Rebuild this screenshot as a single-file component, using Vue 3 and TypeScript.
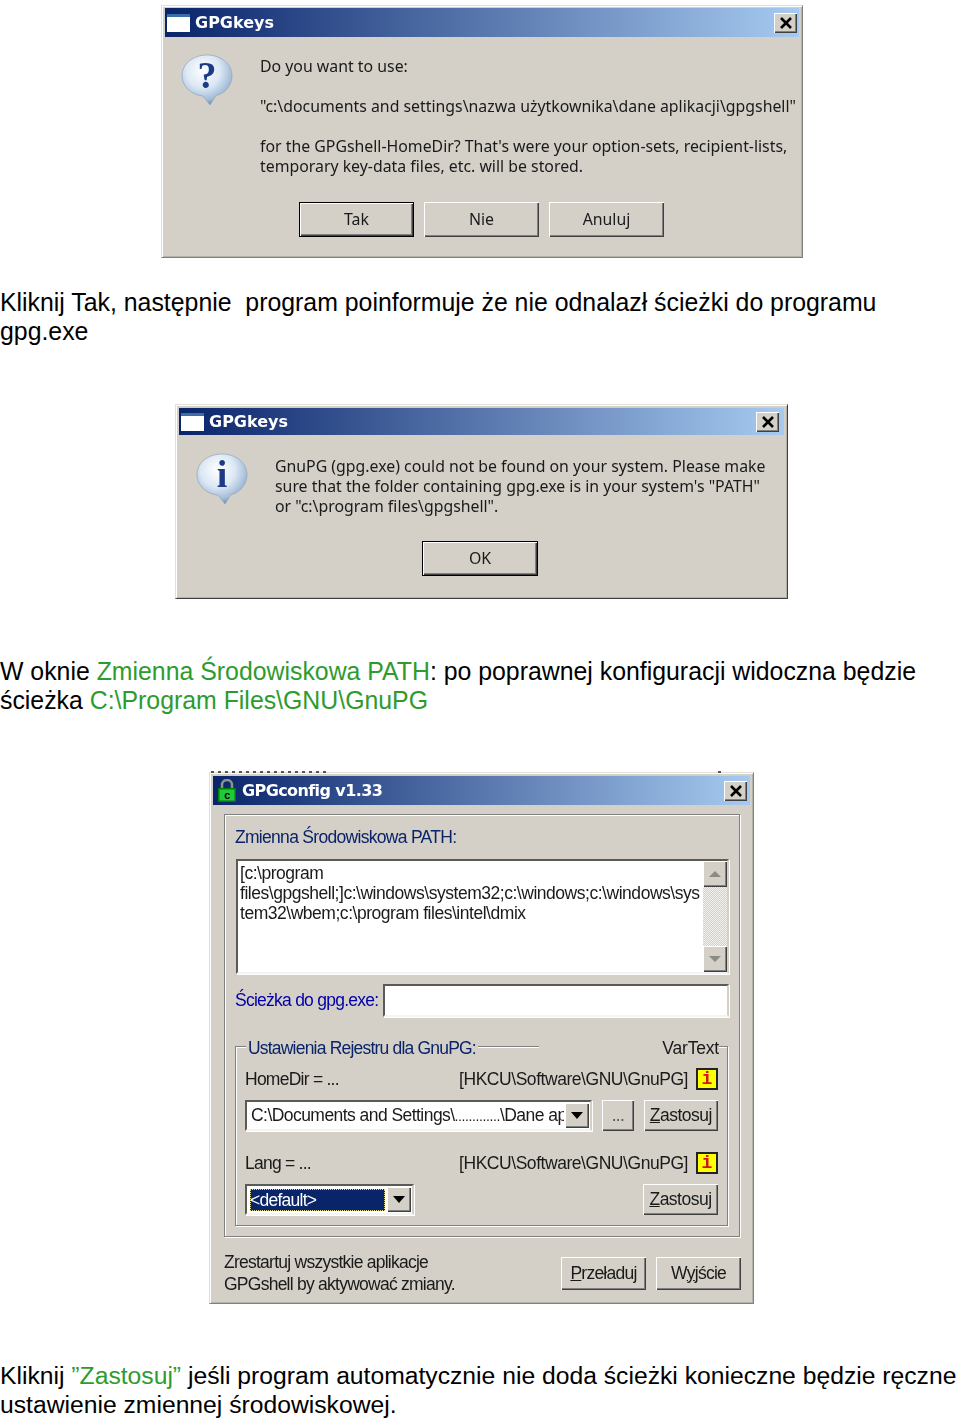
<script setup lang="ts">
const questionButtons: string[] = ['Tak', 'Nie', 'Anuluj']
</script>

<template>
  <main class="page">
    <section class="win win-q">
      <header class="title">
        <span class="win-icon"></span>
        <span class="title-text">GPGkeys</span>
        <span class="close">
          <svg width="14" height="12" viewBox="0 0 14 12"><path d="M2 1l10 10M12 1L2 11" stroke="#000" stroke-width="2.6" fill="none" /></svg>
        </span>
      </header>
      <div class="dlg-body">
        <svg class="bubble" width="50" height="50" viewBox="0 0 50 50">
          <defs>
            <radialGradient id="bq" cx="42%" cy="32%" r="68%">
              <stop offset="0" stop-color="#ffffff" />
              <stop offset=".5" stop-color="#dce8f4" />
              <stop offset=".85" stop-color="#a3bcd8" />
              <stop offset="1" stop-color="#6f8fb6" />
            </radialGradient>
          </defs>
          <path d="M25 0C39 0 50 9 50 20.500C50 31 42 39 34 40.500L28 50L21 41C10 40 0 32 0 20.500C0 9 11 0 25 0Z" fill="url(#bq)" stroke="#8fa3bb" stroke-width=".7" />
          <text x="25" y="33" text-anchor="middle" class="glyph">?</text>
        </svg>
        <div class="dlg-text">
          <p class="line">Do you want to use:</p>
          <p class="line gap">"c:\documents and settings\nazwa użytkownika\dane aplikacji\gpgshell"</p>
          <p class="line gap">for the GPGshell-HomeDir? That's were your option-sets, recipient-lists,</p>
          <p class="line">temporary key-data files, etc. will be stored.</p>
        </div>
      </div>
      <div class="dlg-buttons">
        <span v-for="(b, i) in questionButtons" :key="b" class="btn dlg-btn" :class="{ 'is-default': i === 0 }">{{ b }}</span>
      </div>
    </section>

    <p class="para para-1">Kliknij Tak, następnie&nbsp; program poinformuje że nie odnalazł ścieżki do programu<br />gpg.exe</p>

    <section class="win win-i">
      <header class="title title-i">
        <span class="win-icon"></span>
        <span class="title-text">GPGkeys</span>
        <span class="close close-i">
          <svg width="14" height="12" viewBox="0 0 14 12"><path d="M2 1l10 10M12 1L2 11" stroke="#000" stroke-width="2.6" fill="none" /></svg>
        </span>
      </header>
      <div class="dlg-body dlg-body-i">
        <svg class="bubble" width="50" height="50" viewBox="0 0 50 50">
          <defs>
            <radialGradient id="bi" cx="42%" cy="32%" r="68%">
              <stop offset="0" stop-color="#ffffff" />
              <stop offset=".5" stop-color="#dce8f4" />
              <stop offset=".85" stop-color="#a3bcd8" />
              <stop offset="1" stop-color="#6f8fb6" />
            </radialGradient>
          </defs>
          <path d="M25 0C39 0 50 9 50 20.500C50 31 42 39 34 40.500L28 50L21 41C10 40 0 32 0 20.500C0 9 11 0 25 0Z" fill="url(#bi)" stroke="#8fa3bb" stroke-width=".7" />
          <text x="25" y="33" text-anchor="middle" class="glyph">i</text>
        </svg>
        <div class="dlg-text dlg-text-i">
          <p class="line">GnuPG (gpg.exe) could not be found on your system. Please make</p>
          <p class="line">sure that the folder containing gpg.exe is in your system's "PATH"</p>
          <p class="line">or "c:\program files\gpgshell".</p>
        </div>
      </div>
      <div class="dlg-buttons dlg-buttons-i">
        <span class="btn dlg-btn dlg-btn-ok is-default">OK</span>
      </div>
    </section>

    <p class="para para-2">W oknie <span class="green">Zmienna Środowiskowa PATH</span>: po poprawnej konfiguracji widoczna będzie<br />ścieżka <span class="green">C:\Program Files\GNU\GnuPG</span></p>

    <section class="win win-c">
      <span class="scrap scrap-l"></span>
      <span class="scrap scrap-r"></span>
      <header class="title title-c">
        <svg class="lock" width="18" height="23" viewBox="0 0 18 23">
          <path d="M4 10V6a5 5 0 0 1 10 0v4" fill="none" stroke="#8a9488" stroke-width="2.500" />
          <rect x="0" y="9" width="18" height="14" fill="#008000" />
          <rect x="1.500" y="10.500" width="15" height="11" fill="#22c83c" />
          <text x="9" y="20" text-anchor="middle" class="lock-c">c</text>
        </svg>
        <span class="title-text title-text-c">GPGconfig v1.33</span>
        <span class="close close-c">
          <svg width="14" height="12" viewBox="0 0 14 12"><path d="M2 1l10 10M12 1L2 11" stroke="#000" stroke-width="2.6" fill="none" /></svg>
        </span>
      </header>

      <div class="panel etched">
        <div class="panel-label navy">Zmienna Środowiskowa PATH:</div>
        <div class="memo sunken">
          <div class="memo-text">[c:\program<br />files\gpgshell;]c:\windows\system32;c:\windows;c:\windows\sys<br />tem32\wbem;c:\program files\intel\dmix</div>
          <div class="scrollbar">
            <span class="btn scroll-btn"><i class="tri tri-up"></i></span>
            <span class="scroll-btn btn"><i class="tri tri-down"></i></span>
          </div>
        </div>
        <div class="path-row">
          <span class="path-label">Ścieżka do gpg.exe:</span>
          <span class="path-input sunken"></span>
        </div>

        <div class="group etched">
          <div class="group-head">
            <span class="legend navy">Ustawienia Rejestru dla GnuPG:</span>
            <span class="legend-right">VarText</span>
          </div>
          <div class="reg-row">
            <span>HomeDir = ...</span>
            <span class="reg-key">[HKCU\Software\GNU\GnuPG]</span>
            <span class="info">i</span>
          </div>
          <div class="ctl-row">
            <span class="combo combo-wide sunken">
              <span class="combo-val">C:\Documents and Settings\<span class="tiny-dots">.............</span>\Dane aplikacji</span>
              <span class="btn combo-btn"><i class="tri tri-black"></i></span>
            </span>
            <span class="btn small-btn dots">...</span>
            <span class="btn small-btn zast"><u>Z</u>astosuj</span>
          </div>
          <div class="reg-row reg-row-2">
            <span>Lang = ...</span>
            <span class="reg-key">[HKCU\Software\GNU\GnuPG]</span>
            <span class="info">i</span>
          </div>
          <div class="ctl-row">
            <span class="combo combo-short sunken">
              <span class="combo-sel">&lt;default&gt;</span>
              <span class="btn combo-btn"><i class="tri tri-black"></i></span>
            </span>
            <span class="btn small-btn zast push"><u>Z</u>astosuj</span>
          </div>
        </div>
      </div>

      <footer class="cfg-foot">
        <div class="foot-note">Zrestartuj wszystkie aplikacje<br />GPGshell by aktywować zmiany.</div>
        <span class="btn foot-btn"><u>P</u>rzeładuj</span>
        <span class="btn foot-btn">W<u>y</u>jście</span>
      </footer>
    </section>

    <p class="para para-3">Kliknij <span class="green">”Zastosuj”</span> jeśli program automatycznie nie doda ścieżki konieczne będzie ręczne<br />ustawienie zmiennej środowiskowej.</p>
  </main>
</template>

<style scoped>
.page {
  width: 960px;
  height: 1420px;
  overflow: hidden;
  background: #fff;
  display: flex;
  flex-direction: column;
  align-items: flex-start;
  color: #000;
}
.para {
  margin: 0;
  font: 24.85px/28.500px "Liberation Sans", Arial, sans-serif;
  white-space: nowrap;
}
.para-1 { margin-top: 31px; }
.para-2 { margin-top: 59px; }
.para-3 { margin-top: 58px; font-size: 24.7px; }
.green { color: #2e9b2e; }

.win {
  position: relative;
  box-sizing: border-box;
  background: #d4d0c8;
  border: 1px solid;
  border-color: #e2dfd8 #808080 #808080 #e2dfd8;
  box-shadow: inset 1px 1px 0 #fff, inset -1px -1px 0 #b5b2aa;
  padding: 2px 3px 3px;
  font-family: "Noto Sans", "Open Sans", sans-serif;
  font-size: 15.85px;
  color: #1a1a1a;
  filter: blur(0.35px);
}
.win-q { margin: 5px 0 0 161px; width: 642px; height: 253px; }
.win-i {
  margin: 58px 0 0 175px;
  width: 613px;
  height: 195px;
  padding-top: 3px;
  border-bottom-color: #404040;
  border-right-color: #404040;
}
.win-c {
  margin: 57px 0 0 209px;
  width: 545px;
  height: 532px;
  padding-top: 3px;
  font-family: "Liberation Sans", Arial, sans-serif;
  font-size: 17.500px;
  letter-spacing: -0.75px;
}

.title {
  height: 29px;
  display: flex;
  align-items: center;
  padding: 0 2px;
  background: linear-gradient(90deg, #0a246a, #a6caf0);
  color: #fff;
}
.title-i { height: 27px; }
.win-icon {
  box-sizing: border-box;
  width: 23px;
  height: 18px;
  background: #fff;
  border-top: 3px solid #3a6ea5;
  margin-right: 5px;
}
.title-text {
  font: bold 16px "DejaVu Sans", sans-serif;
  letter-spacing: 0;
  flex: 1;
}
.close {
  box-sizing: border-box;
  width: 23px;
  height: 20px;
  background: #d4d0c8;
  display: flex;
  align-items: center;
  justify-content: center;
  box-shadow: inset 1px 1px 0 #fff, inset -1px -1px 0 #404040, inset -2px -2px 0 #808080;
}
.close-i { margin-right: 3px; }

.dlg-body { display: flex; padding: 18px 0 0 17px; }
.dlg-body-i { padding-top: 19px; padding-left: 18px; }
.bubble { flex: none; margin-right: 28px; overflow: visible; }
.glyph { font: bold 38px "Liberation Serif", serif; fill: #1c3a86; }
.dlg-text { padding-top: 1px; }
.dlg-text-i { padding-top: 2px; }
.line { margin: 0; line-height: 20px; white-space: nowrap; }
.gap { margin-top: 20px; }

.dlg-buttons { display: flex; gap: 10px; padding: 26px 0 0 134px; }
.dlg-buttons-i { padding: 25px 0 0 243px; }
.btn {
  box-sizing: border-box;
  display: flex;
  align-items: center;
  justify-content: center;
  background: #d4d0c8;
  box-shadow: inset 1px 1px 0 #fff, inset -1px -1px 0 #404040, inset -2px -2px 0 #808080;
}
.dlg-btn { width: 115px; height: 35px; padding-bottom: 2px; }
.dlg-btn-ok { width: 116px; }
.is-default { border: 1px solid #000; }

.scrap { position: absolute; top: -2px; height: 2px; }
.scrap-l { left: 1px; width: 118px; background: repeating-linear-gradient(90deg, #555 0 3px, transparent 3px 7px); }
.scrap-r { left: 508px; width: 3px; background: #555; }

.title-c { padding-left: 5px; height: 29px; }
.lock { margin-right: 6px; flex: none; }
.lock-c { font: bold 11px "Liberation Mono", monospace; fill: #000; }
.title-text-c { font: bold 16px "DejaVu Sans", sans-serif; letter-spacing: -0.6px; }
.close-c { margin-right: 1px; }

.etched {
  box-sizing: border-box;
  border: 1px solid #808080;
  box-shadow: inset 1px 1px 0 #fff, 1px 1px 0 #fff;
}
.panel {
  width: 516px;
  height: 423px;
  margin: 9px 0 0 11px;
  padding: 11px 10px 0;
}
.navy { color: #0a246a; }
.panel-label { line-height: 22px; letter-spacing: -0.7px; }
.sunken {
  box-sizing: border-box;
  background: #fff;
  border: 2px solid;
  border-color: #5a5a56 #d4d0c8 #f4f4f0 #5a5a56;
  box-shadow: 1px 1px 0 #fff;
}
.memo {
  display: flex;
  width: 493px;
  height: 115px;
  margin: 11px 0 0 1px;
}
.memo-text {
  flex: 1;
  min-width: 0;
  padding: 2px 0 0 2px;
  line-height: 20px;
  letter-spacing: -0.47px;
  white-space: nowrap;
  overflow: hidden;
}
.scrollbar {
  flex: none;
  width: 24px;
  display: flex;
  flex-direction: column;
  justify-content: space-between;
  background: repeating-conic-gradient(#d4d0c8 0 25%, #f2f1ee 0 50%) 0 0 / 2px 2px;
}
.scroll-btn { height: 26px; }
.tri { display: block; width: 0; height: 0; border-left: 6px solid transparent; border-right: 6px solid transparent; }
.tri-up { border-bottom: 6px solid #8a8a86; }
.tri-down { border-top: 6px solid #8a8a86; }
.tri-black { border-top: 7px solid #000; }

.path-row { display: flex; align-items: center; margin-top: 10px; }
.path-label { color: #0000a8; width: 148px; flex: none; white-space: nowrap; }
.path-input { width: 346px; height: 33px; }

.group {
  width: 493px;
  height: 180px;
  margin-top: 29px;
  padding: 0 9px;
}
.group-head {
  display: flex;
  justify-content: space-between;
  height: 22px;
  margin-top: -11px;
  line-height: 24px;
}
.legend { background: #d4d0c8; padding: 0 2px; margin-left: 1px; letter-spacing: -0.8px; white-space: nowrap; }
.legend-right { background: #d4d0c8; width: 180px; text-align: right; margin-right: -1px; letter-spacing: -0.2px; }
.reg-row { display: flex; align-items: center; height: 22px; margin-top: 10px; white-space: nowrap; }
.reg-row-2 { margin-top: 21px; }
.reg-key { margin-left: auto; margin-right: 8px; letter-spacing: -0.45px; }
.info {
  box-sizing: border-box;
  width: 22px;
  height: 22px;
  background: #ffff00;
  border: 2px solid #222;
  color: #d01818;
  font: bold 18px/18px "Liberation Mono", monospace;
  text-align: center;
  letter-spacing: 0;
}
.ctl-row { display: flex; align-items: center; gap: 10px; height: 31px; margin-top: 10px; }
.combo { display: flex; align-items: center; height: 31px; padding-right: 1px; }
.combo-wide { width: 347px; }
.combo-short { width: 169px; }
.combo-val { flex: 1; min-width: 0; overflow: hidden; white-space: nowrap; padding-left: 4px; letter-spacing: -0.55px; }
.tiny-dots { font-size: 14px; letter-spacing: -0.4px; }
.combo-sel {
  flex: 1;
  margin: 1px 1px 1px 3px;
  height: 22px;
  line-height: 22px;
  background: #0a246a;
  color: #fff;
  outline: 1px dotted #e0d890;
  outline-offset: -1px;
}
.combo-btn { flex: none; width: 24px; height: 25px; margin-left: 1px; }
.small-btn { height: 31px; }
.dots { width: 32px; color: #555; }
.zast { width: 75px; letter-spacing: -0.5px; }
.push { margin-left: auto; }

.cfg-foot { display: flex; align-items: center; gap: 10px; padding: 14px 9px 0 11px; }
.foot-note { flex: none; width: 327px; line-height: 22px; white-space: nowrap; }
.foot-btn { flex: none; width: 85px; height: 33px; }
</style>
